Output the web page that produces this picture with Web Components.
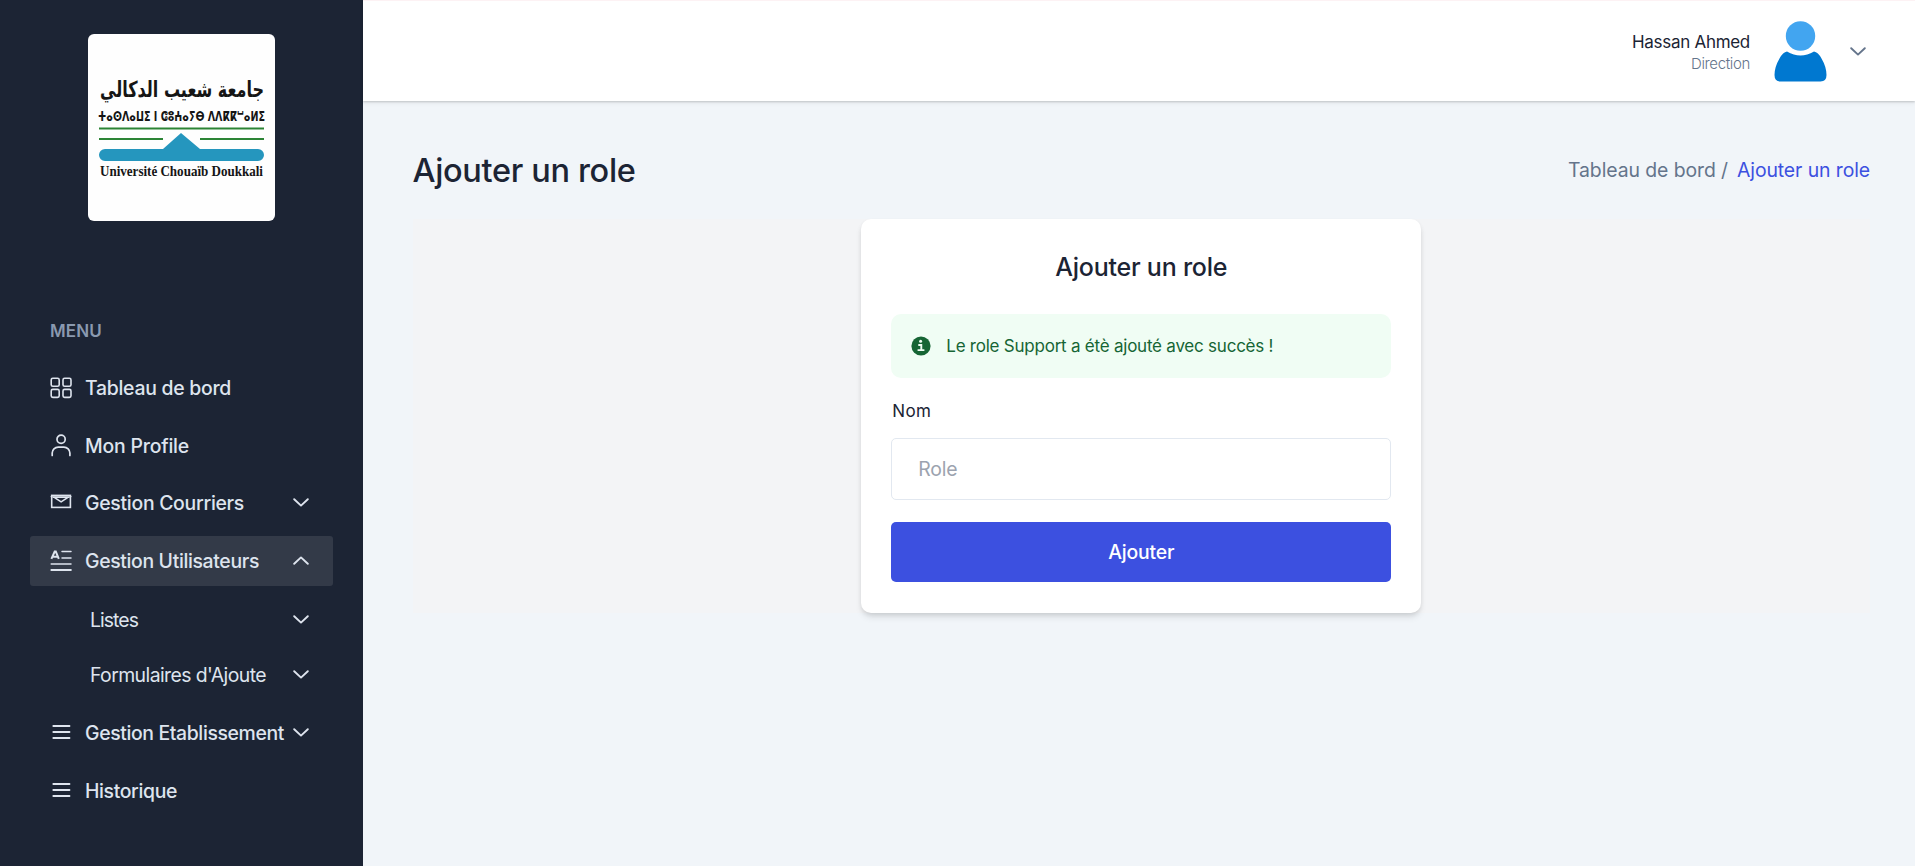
<!DOCTYPE html>
<html lang="fr"><head><meta charset="utf-8"><title>Ajouter un role</title>
<style>
html,body{margin:0;height:100%}
body{font-family:Inter,"Liberation Sans",sans-serif;background:#f1f5f9;overflow:hidden}
</style></head><body>
<role-app></role-app>
<script>
const define=(name,html,setup)=>{
  const t=document.createElement('template');t.innerHTML=html;
  customElements.define(name,class extends HTMLElement{
    constructor(){super();this.attachShadow({mode:'open'}).append(t.content.cloneNode(true));}
    connectedCallback(){if(setup)setup(this,this.shadowRoot);}
  });
};
/* A single line of text whose tracking is set so that it spans the width in "w". */
define('text-line',`<style>:host{display:inline-block;white-space:pre;line-height:1.25;flex:none}span{display:inline-block}</style><span><slot></slot></span>`,(el,r)=>{
  const s=r.querySelector('span'),w=+el.getAttribute('w'),n=el.textContent.length;
  s.style.letterSpacing=((w-s.getBoundingClientRect().width)/n)+'px';
});
define('chevron-icon',`<style>:host{display:block;width:16px;height:9px}:host([up]){transform:scaleY(-1)}svg{display:block}</style>
<svg width="16" height="9" viewBox="0 0 16 9" fill="none" stroke="currentColor" stroke-width="1.9" stroke-linecap="round" stroke-linejoin="round"><path d="M1.2 1.2 8 7.6 14.8 1.2"/></svg>`);
const icons={
 grid:'<g fill="none" stroke="currentColor" stroke-width="1.6"><rect x="1.2" y=".3" width="8" height="8" rx="1.6"/><rect x="13" y=".3" width="8" height="8" rx="1.6"/><rect x="1.2" y="11.4" width="8" height="8" rx="1.6"/><rect x="13" y="11.4" width="8" height="8" rx="1.6"/></g>',
 user:'<g fill="none" stroke="currentColor" stroke-width="1.7" stroke-linecap="round"><circle cx="11.1" cy="4.3" r="4.1"/><path d="M2.200 20.400v-2.300a6 6 0 0 1 6-6h5.700a6 6 0 0 1 6 6v2.300"/></g>',
 mail:'<path d="M.4 4.6h21.4" stroke="currentColor" stroke-opacity=".6" stroke-width="1"/><g fill="none" stroke="currentColor" stroke-width="1.600"><rect x="1.7" y="3.400" width="18.7" height="12"/><path d="M2.600 5.200h17M4.600 5.600l6.500 4.200 6.500-4.200"/></g>',
 list:'<g fill="none" stroke="currentColor"><path stroke-width="2" d="M1.400 8.800 4.700 1.500h1.100l3 7.300M2.700 6.700h5"/><path stroke-width="1.5" stroke-linecap="round" d="M12 1.600H21M12 7.900H21M1.200 13.900H21"/><path stroke-width="2" d="M.600 20H21.600"/></g>',
 bars:'<path d="M3.3 4h16.200M3.300 10h16.200M3.300 16h16.200" stroke="currentColor" stroke-width="1.8" stroke-linecap="round"/>'};
define('menu-item',`<style>
:host{display:flex;align-items:center;height:50px;padding:0 24px 0 20px;box-sizing:border-box;border-radius:3px;color:#dee4ee;font-size:19.4px;font-weight:500}
:host([active]){background:#333a48}
:host([sub]){height:30px;padding-left:60px;font-weight:400}
:host([sub]) svg.i{display:none}
svg.i{width:23px;height:22px;margin-right:12px;overflow:visible;flex:none}
chevron-icon{margin-left:auto;flex:none;margin-top:-1px}</style>
<svg class="i" viewBox="0 0 23 22"></svg><slot></slot>`,(el,r)=>{
  r.querySelector('svg').innerHTML=icons[el.getAttribute('icon')]||'';
  const a=el.getAttribute('arrow');
  if(a){const c=document.createElement('chevron-icon');if(a==='up')c.setAttribute('up','');r.append(c);}
});
define('university-logo',`<style>:host{display:block;width:187px;height:187px;background:#fefefe;border-radius:6px}svg{display:block;overflow:visible}</style>
<svg width="187" height="187" viewBox="0 0 187 187">
<text x="94" y="63" text-anchor="middle" direction="rtl" font-family="'DejaVu Sans'" font-weight="700" font-size="22" textLength="164" lengthAdjust="spacingAndGlyphs" fill="#151515">جامعة شعيب الدكالي</text>
<text x="10" y="87" font-family="'DejaVu Sans',sans-serif" font-weight="700" font-size="14" textLength="167" lengthAdjust="spacingAndGlyphs" fill="#151515">ⵜⴰⵙⴷⴰⵡⵉ ⵏ ⵛⵓⵄⴰⵢⴱ ⴷⴷⴽⴽⵯⴰⵍⵉ</text>
<path d="M11 94.5h165M11 105h64M112 105h64" stroke="#2c8435" stroke-width="2"/>
<path d="M17 115h58L93 99l19 16h58a6 6 0 0 1 0 12H17a6 6 0 0 1 0-12Z" fill="#2596be"/>
<text x="12" y="142" font-family="'Liberation Serif'" font-weight="700" font-size="14.500" textLength="163" lengthAdjust="spacingAndGlyphs" fill="#151515">Université Chouaïb Doukkali</text></svg>`);
define('side-bar',`<style>
:host{display:flex;flex-direction:column;width:362.5px;height:100%;overflow:hidden;box-sizing:border-box;background:#1c2434;flex:none;padding:34px 30px 0}
university-logo{align-self:center;flex:none}
.m{margin:100px 0 0 20px;color:#8a99af;font-size:17px;font-weight:600;height:22px;display:flex;flex:none}
nav{display:flex;flex-direction:column;gap:7.4px;margin-top:20.5px}
menu-item{flex:none}
.s{display:flex;flex-direction:column;gap:25px;padding:12px 0 11px}</style>
<university-logo></university-logo><div class="m"><text-line w="52">MENU</text-line></div>
<nav>
<menu-item icon="grid"><text-line w="146">Tableau de bord</text-line></menu-item>
<menu-item icon="user"><text-line w="104">Mon Profile</text-line></menu-item>
<menu-item icon="mail" arrow="down"><text-line w="159">Gestion Courriers</text-line></menu-item>
<menu-item icon="list" arrow="up" active><text-line w="174">Gestion Utilisateurs</text-line></menu-item>
<div class="s"><menu-item sub arrow="down"><text-line w="48">Listes</text-line></menu-item>
<menu-item sub arrow="down"><text-line w="176">Formulaires d'Ajoute</text-line></menu-item></div>
<menu-item icon="bars" arrow="down"><text-line w="199">Gestion Etablissement</text-line></menu-item>
<menu-item icon="bars"><text-line w="92">Historique</text-line></menu-item>
</nav>`);
define('top-bar',`<style>
:host{display:flex;justify-content:flex-end;align-items:center;height:101px;box-sizing:border-box;background:#fff;border-top:1px solid #fdf2f4;box-shadow:0 1px 2px rgba(0,0,0,.18),0 3px 4px rgba(0,0,0,.04);padding-right:49px}
.u{display:flex;flex-direction:column;align-items:flex-end;margin-right:24px;margin-top:5px}
.n{font-size:17px;color:#1c2434;height:22px}.d{font-size:15px;font-weight:300;color:#64748b;height:20px;margin-top:1px}
.a{width:53px;height:61px;margin-right:23px;flex:none}chevron-icon{color:#64748b}</style>
<div class="u"><text-line class="n" w="118">Hassan Ahmed</text-line><text-line class="d" w="59">Direction</text-line></div>
<svg class="a" viewBox="0 0 53 61"><circle cx="26.5" cy="15" r="14.7" fill="#42a5f0"/><path d="M13 30.5Q26.500 38.500 40 30.500Q44 31 47.500 37.500Q52.500 46 52.500 54Q52.500 60.500 46.500 60.500H6.500Q.500 60.500 .500 54Q.500 46 5.500 37.500Q9 31 13 30.500Z" fill="#0078d0"/></svg>
<chevron-icon></chevron-icon>`);
define('success-alert',`<style>:host{display:flex;align-items:center;height:64px;box-sizing:border-box;padding:0 20px;background:#f0fdf4;border-radius:10px;color:#166534;font-size:17px}svg{width:20px;height:20px;margin-right:15px;flex:none}::slotted(*){margin-top:2px}</style>
<svg viewBox="0 0 20 20"><circle cx="10" cy="10" r="9.6" fill="currentColor"/><circle cx="9.600" cy="5.300" r="1.500" fill="#f0fdf4"/><path d="M8 9h2.300v5M7.300 14.100h5.400" fill="none" stroke="#f0fdf4" stroke-width="1.900" stroke-linecap="round"/></svg><slot></slot>`);
define('role-form',`<style>
:host{display:flex;flex-direction:column;width:560px;height:394px;box-sizing:border-box;padding:30px;background:#fff;border-radius:10px;box-shadow:0 5px 7px -1px rgba(0,0,0,.1),0 2px 5px -1px rgba(0,0,0,.1);color:#1c2434}
.t{align-self:center;font-size:25px;font-weight:500;height:34px;line-height:34px;margin:1px 0 30px}
.l{font-size:17px;margin:21px 0 0 1px;height:24px;line-height:24px}
.i{display:flex;align-items:center;box-sizing:border-box;height:62px;margin-top:15px;padding-left:26px;border:1px solid #e2e8f0;border-radius:5px;color:#9ca3af;font-size:19.400px}
.b{display:flex;align-items:center;justify-content:center;height:60px;margin-top:22px;background:#3c50e0;border-radius:5px;color:#fff;font-size:19.400px;font-weight:500}</style>
<text-line class="t" w="172">Ajouter un role</text-line>
<success-alert><text-line w="327">Le role Support a étè ajouté avec succès !</text-line></success-alert>
<text-line class="l" w="39">Nom</text-line><div class="i"><text-line w="39">Role</text-line></div><div class="b"><text-line w="66">Ajouter</text-line></div>`);
define('role-app',`<style>
:host{display:flex;height:100vh;overflow:hidden}
.c{flex:1;display:flex;flex-direction:column}
main{padding:50px 45px 0 50px}
.h{display:flex;align-items:center;justify-content:space-between;height:38px;margin-bottom:30px}
.h .t{font-size:32.500px;font-weight:500;color:#1c2434;margin-top:2px}
.p{display:flex;gap:9px;font-size:19.400px;color:#64748b}.p .x{color:#3c50e0}
.f{display:flex;justify-content:center;background:#f3f4f6}</style>
<side-bar></side-bar><div class="c"><top-bar></top-bar><main>
<div class="h"><text-line class="t" w="223">Ajouter un role</text-line><div class="p"><text-line w="160">Tableau de bord /</text-line><text-line class="x" w="133">Ajouter un role</text-line></div></div>
<div class="f"><role-form></role-form></div></main></div>`);
</script></body></html>
